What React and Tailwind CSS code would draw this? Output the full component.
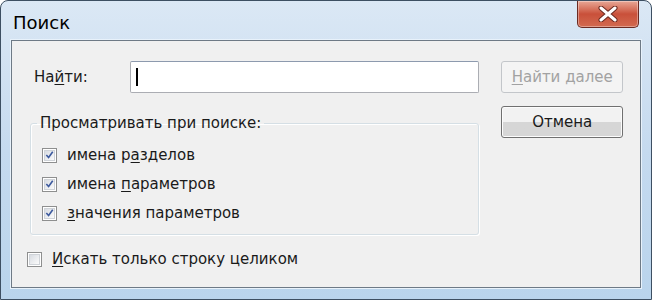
import * as React from "react";

const font = { fontFamily: '"DejaVu Sans", Verdana, sans-serif' };

function Check({ checked }) {
  return (
    <span className="flex h-[15px] w-[15px] shrink-0 items-center justify-center border border-[#8e8f8f] bg-white">
      <span className="flex h-[11px] w-[11px] items-center justify-center border border-[#cfd3d8] bg-gradient-to-br from-[#d8dce2] to-[#fbfbfb]">
        {checked && (
          <svg width="10" height="10" viewBox="0 0 10 10">
            <path d="M1.5 5 L4 7.8 L8.6 1.4" fill="none" stroke="#3d5a9e" strokeWidth="1.8" />
          </svg>
        )}
      </span>
    </span>
  );
}

function Item({ checked, children }) {
  return (
    <div className="flex items-center gap-[10px]">
      <Check checked={checked} />
      <span className="text-[15px] leading-[20px] text-[#1a1a1a]">{children}</span>
    </div>
  );
}

export default function App() {
  return (
    <div
      className="flex h-[300px] w-[652px] flex-col overflow-hidden rounded-t-[8px] border border-[#3d4f62] bg-gradient-to-b from-[#dbe8f5] via-[#c5daef] to-[#b9d4ec]"
      style={font}
    >
      {/* title bar */}
      <div className="flex h-[39px] shrink-0 items-start justify-between">
        <div className="pl-[12px] pt-[10px] text-[18px] leading-[24px] text-black">Поиск</div>
        <div className="mr-[12px] flex h-[27px] w-[62px] items-center justify-center rounded-b-[5px] border border-t-0 border-[#6b2a22] bg-gradient-to-b from-[#e7a796] via-[#c9503a] to-[#d26a50] shadow-[inset_0_0_0_1px_rgba(255,255,255,0.35)]">
          <svg width="22" height="16" viewBox="0 0 22 16">
            <path d="M4 2 L18 14 M18 2 L4 14" stroke="#6c2a20" strokeWidth="5" strokeLinecap="round" />
            <path d="M4 2 L18 14 M18 2 L4 14" stroke="#ffffff" strokeWidth="3" strokeLinecap="round" />
          </svg>
        </div>
      </div>

      {/* client area */}
      <div className="mx-[10px] mb-[11px] flex flex-1 border border-[#6e7a86] bg-[#f0f0f0] pl-[18px] pr-[17px] pt-[20px] shadow-[0_0_0_1px_#e8f2fb]">
        <div className="flex w-[451px] flex-col">
          <div className="flex items-center">
            <span className="w-[100px] pl-[4px] text-[15px] text-[#1a1a1a]">
              На<span className="underline underline-offset-2">й</span>ти:
            </span>
            <div className="flex h-[32px] flex-1 items-center rounded-[2px] border border-[#abadb3] border-t-[#8d9aae] bg-white pl-[5px]">
              <span className="h-[18px] w-[2px] bg-black" />
            </div>
          </div>

          <fieldset className="mt-[20px] rounded-[3px] border border-[#d5dfe5] pb-[11px] pl-[11px] shadow-[inset_1px_1px_0_#ffffff,1px_1px_0_#ffffff]">
            <legend className="ml-[-5px] px-[3px] text-[15px] leading-[20px] text-[#1a1a1a]">
              Просматривать при поиске:
            </legend>
            <div className="mt-[12px] flex flex-col gap-[9px]">
              <Item checked>
                имена р<span className="underline underline-offset-2">а</span>зделов
              </Item>
              <Item checked>
                имена <span className="underline underline-offset-2">п</span>араметров
              </Item>
              <Item checked>
                <span className="underline underline-offset-2">з</span>начения параметров
              </Item>
            </div>
          </fieldset>

          <div className="ml-[-3px] mt-[14px]">
            <Item checked={false}>
              <span className="underline underline-offset-2">И</span>скать только строку целиком
            </Item>
          </div>
        </div>

        <div className="ml-[22px] flex w-[122px] flex-col gap-[13px]">
          <button className="h-[32px] rounded-[3px] border border-[#c3c6ca] bg-[#f4f4f4] text-[15px] text-[#a2a2a2]">
            <span className="underline underline-offset-2">Н</span>айти далее
          </button>
          <button className="h-[32px] rounded-[3px] border border-[#707070] bg-gradient-to-b from-[#f2f2f2] from-50% to-[#d6d6d6] to-50% text-[15px] text-[#1a1a1a] shadow-[inset_0_0_0_1px_#fcfcfc]">
            Отмена
          </button>
        </div>
      </div>
    </div>
  );
}
